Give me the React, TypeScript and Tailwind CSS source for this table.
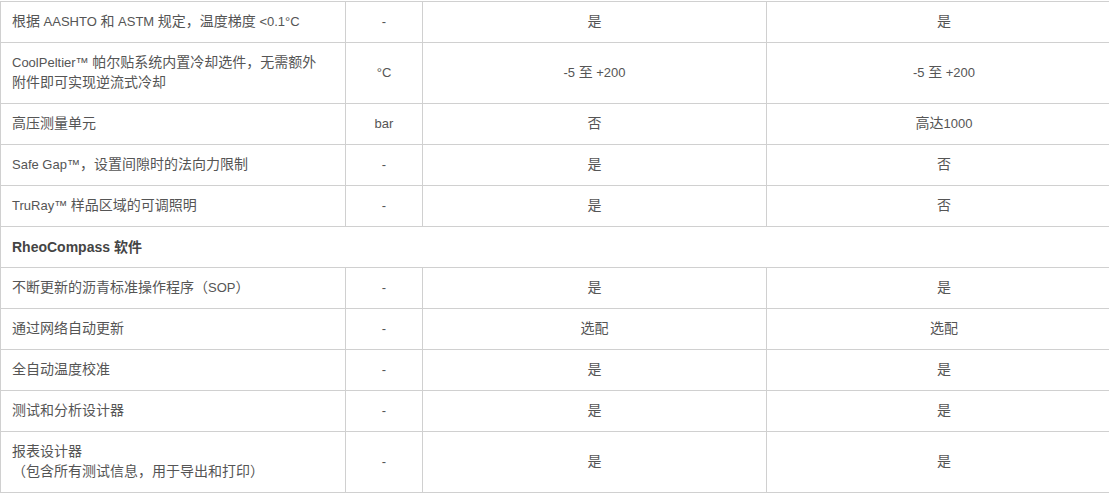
type Row =
  | { kind: 'section'; title: string }
  | { kind: 'item'; label: string[]; unit: string; a: string; b: string };

const ROWS: Row[] = [
  { kind: 'item', label: ['根据 AASHTO 和 ASTM 规定，温度梯度 <0.1°C'], unit: '-', a: '是', b: '是' },
  {
    kind: 'item',
    label: ['CoolPeltier™ 帕尔贴系统内置冷却选件，无需额外', '附件即可实现逆流式冷却'],
    unit: '°C',
    a: '-5 至 +200',
    b: '-5 至 +200',
  },
  { kind: 'item', label: ['高压测量单元'], unit: 'bar', a: '否', b: '高达1000' },
  { kind: 'item', label: ['Safe Gap™，设置间隙时的法向力限制'], unit: '-', a: '是', b: '否' },
  { kind: 'item', label: ['TruRay™ 样品区域的可调照明'], unit: '-', a: '是', b: '否' },
  { kind: 'section', title: 'RheoCompass 软件' },
  { kind: 'item', label: ['不断更新的沥青标准操作程序（SOP）'], unit: '-', a: '是', b: '是' },
  { kind: 'item', label: ['通过网络自动更新'], unit: '-', a: '选配', b: '选配' },
  { kind: 'item', label: ['全自动温度校准'], unit: '-', a: '是', b: '是' },
  { kind: 'item', label: ['测试和分析设计器'], unit: '-', a: '是', b: '是' },
  { kind: 'item', label: ['报表设计器', '（包含所有测试信息，用于导出和打印）'], unit: '-', a: '是', b: '是' },
];

const cell = 'border border-[#d0d0d0] py-[10px] leading-5 align-middle';

// CJK glyphs in the source sit on a 14px advance while latin stays at 13px
function Mixed({ text }: { text: string }) {
  const parts = text.split(/([\u3000-\u9fff\uff00-\uffef]+)/);
  return (
    <>
      {parts.map((p, i) =>
        i % 2 === 1 ? (
          <span key={i} className="text-[14px] leading-none">
            {p}
          </span>
        ) : (
          p
        )
      )}
    </>
  );
}

export default function App() {
  return (
    <div
      className="w-[1109px] h-[494px] overflow-hidden bg-white pt-px text-[13px] text-[#555]"
      style={{ fontFamily: '"Liberation Sans", Arial, "Noto Sans CJK SC", sans-serif' }}
    >
      <table className="w-[1121px] table-fixed border-collapse">
        <colgroup>
          <col className="w-[345px]" />
          <col className="w-[77px]" />
          <col className="w-[344px]" />
          <col className="w-[355px]" />
        </colgroup>
        <tbody>
          {ROWS.map((row, i) =>
            row.kind === 'section' ? (
              <tr key={i}>
                <td colSpan={4} className={`${cell} px-[11px] text-[14px] font-bold text-[#444]`}>
                  {row.title}
                </td>
              </tr>
            ) : (
              <tr key={i}>
                <td className={`${cell} px-[11px] text-left`}>
                  {row.label.map((l, j) => (
                    <div key={j} className="h-5 whitespace-nowrap">
                      <Mixed text={l} />
                    </div>
                  ))}
                </td>
                <td className={`${cell} text-center`}>{row.unit}</td>
                <td className={`${cell} text-center`}>
                  <div className="h-5">
                    <Mixed text={row.a} />
                  </div>
                </td>
                <td className={`${cell} text-center`}>
                  <div className="h-5">
                    <Mixed text={row.b} />
                  </div>
                </td>
              </tr>
            )
          )}
        </tbody>
      </table>
    </div>
  );
}
